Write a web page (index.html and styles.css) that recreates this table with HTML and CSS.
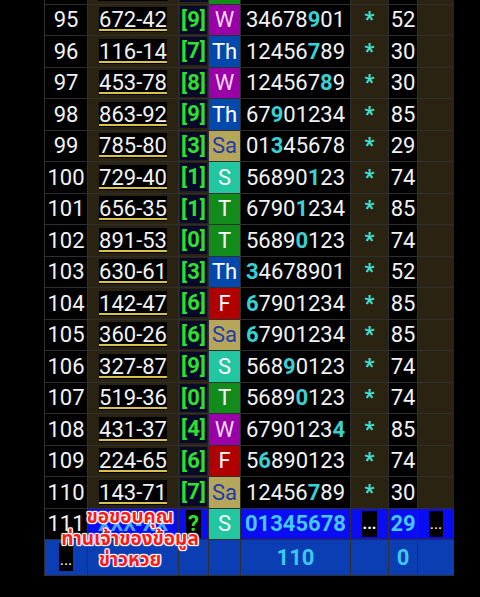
FILE: index.html
```html
<!DOCTYPE html>
<html>
<head>
<meta charset="utf-8">
<link rel="stylesheet" href="styles.css">
</head>
<body>
<div class="tbl">
  <div class="row">
    <div class="c num"></div><div class="c code"><span class="blank"></span></div><div class="c br"><span class="blank-br"></span></div><div class="c day d-t"></div><div class="c dig"></div><div class="c star"></div><div class="c val"></div><div class="c ext"></div>
  </div>
  <div class="row">
    <div class="c num">95</div><div class="c code"><span class="cv">672-42</span></div><div class="c br"><span>[9]</span></div><div class="c day d-w">W</div><div class="c dig">34678<b>9</b>01</div><div class="c star">*</div><div class="c val">52</div><div class="c ext"></div>
  </div>
  <div class="row">
    <div class="c num">96</div><div class="c code"><span class="cv">116-14</span></div><div class="c br"><span>[7]</span></div><div class="c day d-th">Th</div><div class="c dig">12456<b>7</b>89</div><div class="c star">*</div><div class="c val">30</div><div class="c ext"></div>
  </div>
  <div class="row">
    <div class="c num">97</div><div class="c code"><span class="cv">453-78</span></div><div class="c br"><span>[8]</span></div><div class="c day d-w">W</div><div class="c dig">124567<b>8</b>9</div><div class="c star">*</div><div class="c val">30</div><div class="c ext"></div>
  </div>
  <div class="row">
    <div class="c num">98</div><div class="c code"><span class="cv">863-92</span></div><div class="c br"><span>[9]</span></div><div class="c day d-th">Th</div><div class="c dig">67<b>9</b>01234</div><div class="c star">*</div><div class="c val">85</div><div class="c ext"></div>
  </div>
  <div class="row">
    <div class="c num">99</div><div class="c code"><span class="cv">785-80</span></div><div class="c br"><span>[3]</span></div><div class="c day d-sa">Sa</div><div class="c dig">01<b>3</b>45678</div><div class="c star">*</div><div class="c val">29</div><div class="c ext"></div>
  </div>
  <div class="row">
    <div class="c num">100</div><div class="c code"><span class="cv">729-40</span></div><div class="c br"><span>[1]</span></div><div class="c day d-s">S</div><div class="c dig">56890<b>1</b>23</div><div class="c star">*</div><div class="c val">74</div><div class="c ext"></div>
  </div>
  <div class="row">
    <div class="c num">101</div><div class="c code"><span class="cv">656-35</span></div><div class="c br"><span>[1]</span></div><div class="c day d-t">T</div><div class="c dig">6790<b>1</b>234</div><div class="c star">*</div><div class="c val">85</div><div class="c ext"></div>
  </div>
  <div class="row">
    <div class="c num">102</div><div class="c code"><span class="cv">891-53</span></div><div class="c br"><span>[0]</span></div><div class="c day d-t">T</div><div class="c dig">5689<b>0</b>123</div><div class="c star">*</div><div class="c val">74</div><div class="c ext"></div>
  </div>
  <div class="row">
    <div class="c num">103</div><div class="c code"><span class="cv">630-61</span></div><div class="c br"><span>[3]</span></div><div class="c day d-th">Th</div><div class="c dig"><b>3</b>4678901</div><div class="c star">*</div><div class="c val">52</div><div class="c ext"></div>
  </div>
  <div class="row">
    <div class="c num">104</div><div class="c code"><span class="cv">142-47</span></div><div class="c br"><span>[6]</span></div><div class="c day d-f">F</div><div class="c dig"><b>6</b>7901234</div><div class="c star">*</div><div class="c val">85</div><div class="c ext"></div>
  </div>
  <div class="row">
    <div class="c num">105</div><div class="c code"><span class="cv">360-26</span></div><div class="c br"><span>[6]</span></div><div class="c day d-sa">Sa</div><div class="c dig"><b>6</b>7901234</div><div class="c star">*</div><div class="c val">85</div><div class="c ext"></div>
  </div>
  <div class="row">
    <div class="c num">106</div><div class="c code"><span class="cv">327-87</span></div><div class="c br"><span>[9]</span></div><div class="c day d-s">S</div><div class="c dig">568<b>9</b>0123</div><div class="c star">*</div><div class="c val">74</div><div class="c ext"></div>
  </div>
  <div class="row">
    <div class="c num">107</div><div class="c code"><span class="cv">519-36</span></div><div class="c br"><span>[0]</span></div><div class="c day d-t">T</div><div class="c dig">5689<b>0</b>123</div><div class="c star">*</div><div class="c val">74</div><div class="c ext"></div>
  </div>
  <div class="row">
    <div class="c num">108</div><div class="c code"><span class="cv">431-37</span></div><div class="c br"><span>[4]</span></div><div class="c day d-w">W</div><div class="c dig">6790123<b>4</b></div><div class="c star">*</div><div class="c val">85</div><div class="c ext"></div>
  </div>
  <div class="row">
    <div class="c num">109</div><div class="c code"><span class="cv">224-65</span></div><div class="c br"><span>[6]</span></div><div class="c day d-f">F</div><div class="c dig">5<b>6</b>890123</div><div class="c star">*</div><div class="c val">74</div><div class="c ext"></div>
  </div>
  <div class="row">
    <div class="c num">110</div><div class="c code"><span class="cv">143-71</span></div><div class="c br"><span>[7]</span></div><div class="c day d-sa">Sa</div><div class="c dig">12456<b>7</b>89</div><div class="c star">*</div><div class="c val">30</div><div class="c ext"></div>
  </div>
  <div class="row row-new">
    <div class="c num">111</div><div class="c code"><span class="xx">XXX-XX</span></div><div class="c br"><span class="q">?</span></div><div class="c day d-s">S</div><div class="c dig">01345678</div><div class="c star"><span class="dots">...</span></div><div class="c val">29</div><div class="c ext"><span class="dots">...</span></div>
  </div>
  <div class="row row-foot">
    <div class="c num"><span class="dots">...</span></div><div class="c code"></div><div class="c br"></div><div class="c day"></div><div class="c dig">110</div><div class="c star"></div><div class="c val">0</div><div class="c ext"></div>
  </div>
  <div class="thanks">ขอขอบคุณ<br>ท่านเจ้าของข้อมูล<br>ข่าวหวย</div>
</div>
</body>
</html>
```

FILE: styles.css
```css
html, body {
  margin: 0;
  padding: 0;
  background: #000;
  height: 597px;
  overflow: hidden;
}
body {
  font-family: Roboto, "Noto Sans", "Noto Sans Thai", sans-serif;
}
.tbl {
  position: relative;
  margin: -27px 0 0 44px;
  width: 410px;
  box-sizing: border-box;
  display: flex;
  flex-direction: column;
  gap: 1px;
  background: #2f2f2f;
  padding: 0 0 1px 1px;
}
.row {
  display: grid;
  grid-template-columns: 42px 90px 29px 31px 109px 37px 28px 36px;
  column-gap: 1px;
  height: 30.5px;
}
.c {
  display: flex;
  align-items: center;
  justify-content: center;
  font-size: 22px;
  color: #f2f2f2;
  background: #000;
  overflow: hidden;
  white-space: nowrap;
}
.code, .star, .ext, .br {
  background: #2a2312;
}
.blank {
  display: block;
  width: 70px;
  height: 25px;
  background: #000;
}
.blank-br {
  display: block;
  width: 26px;
  height: 28px;
  background: #08082a;
}
.cv {
  background: #000;
  text-decoration: underline;
  text-decoration-color: #d8c24a;
  text-decoration-thickness: 2px;
  text-underline-offset: 2px;
  line-height: 25px;
}
.br span {
  background: #08082a;
  color: #2ee02e;
  font-weight: 700;
  line-height: 28px;
  padding: 0 1px;
}
.day { color: #fff; }
.d-w { background: #9a00a8; color: #f4d8f4; }
.d-th { background: #0349ad; }
.d-sa { background: #b5a65a; color: #1f3ca8; }
.d-s { background: #22c6a0; }
.d-t { background: #138b1b; }
.d-f { background: #b00000; }
.dig b {
  color: #38d0d4;
  font-weight: 700;
}
.star {
  color: #3fe0d2;
  font-weight: 700;
}
.row-new .c { background: #0a0cf2; }
.row-new .num { background: #000; }
.row-new .dig, .row-new .val {
  color: #45c8ff;
  font-weight: 700;
}
.row-new .day { background: #22c6a0; }
.xx {
  color: #4aa8ff;
  font-weight: 700;
  font-size: 20px;
}
.row-new .br span.q {
  background: #000;
  color: #2ee02e;
  font-weight: 700;
  line-height: 28px;
  padding: 0 2px;
}
.dots {
  background: #000;
  color: #fff;
  font-size: 16px;
  line-height: 26px;
  padding: 0 1px;
  display: inline-block;
  height: 26px;
}
.row-foot {
  height: 34.5px;
}
.row-foot .c {
  background: #0b3db3;
  color: #3ec8ee;
  font-weight: 700;
}
.row-foot .num .dots {
  height: 28px;
  line-height: 34px;
  font-weight: 400;
  color: #fff;
}
.thanks {
  position: absolute;
  left: -14px;
  bottom: 4px;
  width: 200px;
  text-align: center;
  font-family: "Noto Sans Thai", "Noto Sans", sans-serif;
  font-weight: 700;
  font-size: 19px;
  line-height: 21.5px;
  color: #ff1a1a;
  text-shadow: 1px 0 0 #fff, -1px 0 0 #fff, 0 1px 0 #fff, 0 -1px 0 #fff, 1px 1px 1px #fff, -1px -1px 1px #fff, 1px -1px 1px #fff, -1px 1px 1px #fff;
}
```
